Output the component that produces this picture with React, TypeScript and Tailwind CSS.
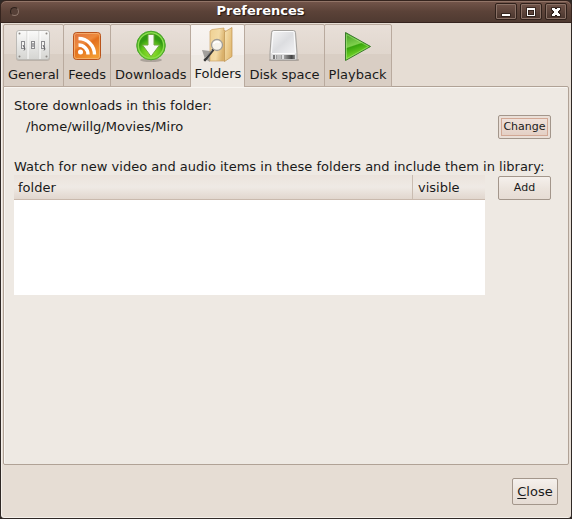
import { useState, type ReactNode } from "react";

function GeneralIcon() {
  return (
    <svg width="36" height="32" viewBox="0 0 36 32" aria-hidden="true">
      <defs>
        <linearGradient id="plate" x2="0" y2="1">
          <stop offset="0" stopColor="#fafaf9" />
          <stop offset="1" stopColor="#d5d5d2" />
        </linearGradient>
      </defs>
      <rect x="0" y="1" width="34" height="30" rx="3" fill="#8f8983" opacity=".4" />
      <rect x=".5" y=".5" width="33" height="29" rx="2.500" fill="url(#plate)" stroke="#bcbab6" />
      <path d="M11 1v28M23 1v28" stroke="#d3d3d0" />
      <path d="M12 1v28M24 1v28" stroke="#fff" />
      <g fill="#8b8783">
        <circle cx="3.500" cy="3.500" r="1" />
        <circle cx="30.500" cy="3.500" r="1" />
        <circle cx="3.500" cy="26.500" r="1" />
        <circle cx="30.500" cy="26.500" r="1" />
      </g>
      <g fill="#f4f4f2" stroke="#8b8b8e">
        <rect x="5.500" y="11.500" width="3" height="7" />
        <rect x="15.500" y="11.500" width="3" height="7" />
        <rect x="25.500" y="11.500" width="3" height="7" />
      </g>
      <path d="M7 15l2 4-1 1.500M17 13v4M27 15l2 4-1 1.500" stroke="#5f5f63" fill="none" />
    </svg>
  );
}

function FeedIcon() {
  return (
    <svg width="32" height="32" viewBox="0 0 32 32" aria-hidden="true">
      <defs>
        <linearGradient id="feed" x2=".6" y2="1">
          <stop offset="0" stopColor="#de7040" />
          <stop offset=".45" stopColor="#ee8a3c" />
          <stop offset=".55" stopColor="#e3701e" />
          <stop offset="1" stopColor="#f39a30" />
        </linearGradient>
      </defs>
      <rect x="2.500" y="2.500" width="27" height="27" rx="3" fill="url(#feed)" stroke="#b9541c" />
      <rect x="3.500" y="3.500" width="25" height="25" rx="2" fill="none" stroke="#f6bb7c" opacity=".7" />
      <circle cx="9.500" cy="22" r="2.500" fill="#fff" />
      <path d="M7.500 15a9.500 9.500 0 0 1 9.500 9.500M7.500 8.500a16 16 0 0 1 16 16" fill="none" stroke="#fff" strokeWidth="3.400" />
    </svg>
  );
}

function DownloadIcon() {
  return (
    <svg width="32" height="32" viewBox="0 0 32 32" aria-hidden="true">
      <defs>
        <radialGradient id="down" cy=".75">
          <stop offset="0" stopColor="#9be334" />
          <stop offset=".65" stopColor="#62c51b" />
          <stop offset="1" stopColor="#329a12" />
        </radialGradient>
      </defs>
      <ellipse cx="16" cy="30" rx="11" ry="2" fill="#6a645e" opacity=".4" />
      <circle cx="16" cy="15.500" r="14.300" fill="url(#down)" stroke="#4aa82a" />
      <circle cx="16" cy="15.500" r="12.700" fill="none" stroke="#8bdc4d" strokeWidth="1.500" />
      <path d="M13 4.500h6V15h5.500L16 26.500 7.500 15H13z" fill="#f8f8f5" stroke="#6fa63f" />
    </svg>
  );
}

function FolderIcon() {
  return (
    <svg width="36" height="36" viewBox="0 0 36 36" aria-hidden="true">
      <defs>
        <linearGradient id="back" x2="1" y2=".3">
          <stop offset="0" stopColor="#efd193" />
          <stop offset=".6" stopColor="#f3dba6" />
          <stop offset="1" stopColor="#d9b06a" />
        </linearGradient>
        <linearGradient id="flap" x2="1" y2=".6">
          <stop offset="0" stopColor="#f8e5b6" />
          <stop offset="1" stopColor="#e2b971" />
        </linearGradient>
      </defs>
      <path d="M2 23l8 1v11l-5-3z" fill="#6d6b68" opacity=".6" />
      <path d="M10 4l2-1.500L24 1v3l1-1v31H10z" fill="url(#back)" stroke="#cda566" strokeWidth=".7" />
      <path d="M24.500 5L32 .500v29l-7.500 5z" fill="url(#flap)" stroke="#bf9350" strokeWidth=".7" />
      <path d="M13 23L5 33" stroke="#3a3a3a" strokeWidth="2.600" strokeLinecap="round" />
      <path d="M12 23L5 31" stroke="#a8a8a6" />
      <circle cx="17" cy="18" r="5.500" fill="#f6f3ea" stroke="#a09d97" strokeWidth="1.300" />
      <path d="M13.500 17a4 4 0 0 1 6-1.500" fill="none" stroke="#fff" strokeWidth="1.500" />
    </svg>
  );
}

function DiskIcon() {
  return (
    <svg width="32" height="32" viewBox="0 0 32 32" aria-hidden="true">
      <defs>
        <linearGradient id="disk" x2="1" y2="1">
          <stop offset="0" stopColor="#f4f4f5" />
          <stop offset=".5" stopColor="#dcdde0" />
          <stop offset="1" stopColor="#f2f2f4" />
        </linearGradient>
        <linearGradient id="slot">
          <stop offset="0" stopColor="#a0a0a0" />
          <stop offset=".7" stopColor="#444" />
          <stop offset="1" stopColor="#888" />
        </linearGradient>
      </defs>
      <rect x="1" y="29" width="30" height="2" rx="1" fill="#6f6963" opacity=".4" />
      <path d="M3.500 2.500q.3-2 2-2h20q1.700 0 2 2l1.500 20v6q0 1.500-1.500 1.500h-24q-1.500 0-1.500-1.500v-6z" fill="#dededf" stroke="#a3a09c" />
      <path d="M5 2.500q0-1 1-1h19q1 0 1 1l1.500 20q0 1-1 1h-22q-1 0-1-1z" fill="url(#disk)" stroke="#fff" strokeWidth=".9" />
      <rect x="5" y="25" width="2" height="4" fill="#777" />
      <rect x="8" y="25" width="6" height="4" fill="#9c9c9c" />
      <path d="M10 25v4M12 25v4" stroke="#ddd" />
      <rect x="16" y="25" width="11" height="4" fill="url(#slot)" />
    </svg>
  );
}

function PlayIcon() {
  return (
    <svg width="32" height="32" viewBox="0 0 32 32" aria-hidden="true">
      <defs>
        <linearGradient id="play" x2=".3" y2="1">
          <stop offset="0" stopColor="#3d9a20" />
          <stop offset=".5" stopColor="#7fd04c" />
          <stop offset=".54" stopColor="#37a50c" />
          <stop offset="1" stopColor="#8ae634" />
        </linearGradient>
      </defs>
      <path d="M3.500 2.500L28.500 16.500 3.500 30.500z" fill="url(#play)" stroke="#3a7a2c" strokeLinejoin="round" />
      <path d="M4.500 4.500L26.500 16.500 4.500 28.800z" fill="none" stroke="#a4e47a" strokeWidth=".9" opacity=".7" />
    </svg>
  );
}

const tabs: { name: string; icon: ReactNode }[] = [
  { name: "General", icon: <GeneralIcon /> },
  { name: "Feeds", icon: <FeedIcon /> },
  { name: "Downloads", icon: <DownloadIcon /> },
  { name: "Folders", icon: <FolderIcon /> },
  { name: "Disk space", icon: <DiskIcon /> },
  { name: "Playback", icon: <PlayIcon /> },
];

const controls = [
  { label: "Minimize", shape: <path d="M3 9h8v2H3z" /> },
  { label: "Maximize", shape: <path fillRule="evenodd" d="M3 3h8v8H3zM4 5v5h6V5z" /> },
  { label: "Close window", shape: <path d="M3 3h3v1h2V3h3v2h-1v1H9v2h1v1h1v2H8v-1H6v1H3V9h1V8h1V6H4V5H3z" /> },
];

function TitleBar() {
  return (
    <header className="grid h-[23px] grid-cols-[1fr_auto_1fr] items-center rounded-t-md border border-[#35241e] bg-linear-to-b from-[#74564b] from-0% via-[#5b4238] via-50% to-[#4f3a31] pr-1 pl-[9px] shadow-[inset_0_1px_0_#927568]">
      <span className="size-[9px] rounded-full border border-[#2e211c] border-r-[#8d766c] border-b-[#8d766c] bg-[#564037]" />
      <h1 className="mb-0.5 pr-14 text-[13px] leading-4 font-bold text-white [text-shadow:1px_1px_1px_#1e1410]">Preferences</h1>
      <div className="flex justify-end gap-[3px]">
        {controls.map((c) => (
          <button
            key={c.label}
            aria-label={c.label}
            className="flex h-[17px] w-[22px] items-center justify-center rounded-xs border border-[#30211b] bg-linear-to-b from-[#715449] to-[#49352d] shadow-[inset_0_0_0_1px_#8a7166]"
          >
            <svg width="14" height="14" viewBox="0 0 14 14" fill="#fff" stroke="#2a1c17" strokeWidth="1.500" paintOrder="stroke" aria-hidden="true">
              {c.shape}
            </svg>
          </button>
        ))}
      </div>
    </header>
  );
}

const buttonBase =
  "shrink-0 rounded-xs border border-[#a3968b] text-center text-[#1a1a1a] bg-linear-to-b from-[#f5f0ec] from-0% via-[#ebe3dc] via-55% to-[#e6dcd4]";

export default function App() {
  const [active, setActive] = useState("Folders");
  return (
    <div className="bg-[#2f2825] font-['DejaVu_Sans',sans-serif] text-[13px] text-[#1a1a1a]">
      <main className="flex min-h-screen flex-col">
        <TitleBar />
        <div className="flex grow flex-col rounded-b-sm border border-t-0 border-[#2f2825] bg-[#e6ddd4] px-0.5 pt-px shadow-[inset_1px_-1px_0_#f5f0eb]">
          <div role="tablist" className="relative -mb-px flex h-[63px] items-stretch">
            {tabs.map(({ name, icon }, i) => (
              <button
                key={name}
                role="tab"
                id={`tab-${i}`}
                aria-controls="panel"
                aria-selected={active === name}
                onClick={() => setActive(name)}
                className={
                  active === name
                    ? "-ml-px flex flex-col items-center rounded-t-xs border border-b-0 border-[#b9aa9e] bg-linear-to-b from-[#f8f4f1] from-0% via-[#f2ede9] via-48% to-[#eee9e3] to-48% px-[3px] pt-0.5"
                    : `flex flex-col items-center rounded-t-xs border border-[#b9aa9e] bg-linear-to-b from-[#e8dfd8] from-0% via-[#e0d6cd] via-48% to-[#d9cec4] to-48% px-1 pt-[5px] ${i ? "-ml-px" : ""}`
                }
              >
                <span className={active === name ? "flex h-9 items-center" : "flex h-8 items-center"}>{icon}</span>
                <span className={active === name ? "mt-px leading-5 whitespace-nowrap" : "mt-[3px] leading-5 whitespace-nowrap"}>{name}</span>
              </button>
            ))}
          </div>
          <section
            id="panel"
            role="tabpanel"
            aria-labelledby={`tab-${tabs.findIndex((t) => t.name === active)}`}
            className="grow rounded-b-xs rounded-tr-xs border border-[#b0a296] bg-[#eee9e3] pt-2.5 pr-[17px] pb-4 pl-2.5 shadow-[inset_1px_1px_0_#f8f5f1]"
          >
            <h2 className="leading-[18px]">Store downloads in this folder:</h2>
            <div className="flex h-6 items-stretch justify-between">
              <p className="pl-3 leading-6">/home/willg/Movies/Miro</p>
              <button className="w-[53px] shrink-0 rounded-xs border border-[#a3968b] bg-[#eadfd7] p-0.5 text-[11px]">
                <span className="flex h-[18px] items-center justify-center border border-[#d2a895] bg-linear-to-b from-[#efe1da] to-[#e4d0c5] pt-px">
                  Change
                </span>
              </button>
            </div>
            <h2 className="mt-5 leading-4 whitespace-nowrap">
              Watch for new video and audio items in these folders and include them in library:
            </h2>
            <div className="flex items-start gap-[13px]">
              <div className="h-[120px] grow bg-white">
                <table className="w-full table-fixed border-separate border-spacing-0">
                  <thead>
                    <tr className="h-[25px] bg-linear-to-b from-[#ebe3dc] from-0% via-[#efeae5] via-48% to-[#e0d5cc] to-100%">
                      <th className="border-b border-[#c9b9ad] pt-0.5 pl-1 text-left leading-5 font-normal">folder</th>
                      <th className="w-[73px] border-b border-[#c9b9ad] pt-0.5 pl-1.5 text-left leading-5 font-normal shadow-[inset_1px_0_0_#c9bcb1]">
                        visible
                      </th>
                    </tr>
                  </thead>
                  <tbody />
                </table>
              </div>
              <button className={`mt-px h-6 w-[53px] pt-px text-[11px] ${buttonBase}`}>Add</button>
            </div>
          </section>
          <footer className="flex justify-end pt-[13px] pr-[11px] pb-[13px]">
            <button className={`h-[27px] w-[46px] ${buttonBase}`}>
              <span className="underline underline-offset-2">C</span>lose
            </button>
          </footer>
        </div>
      </main>
    </div>
  );
}
